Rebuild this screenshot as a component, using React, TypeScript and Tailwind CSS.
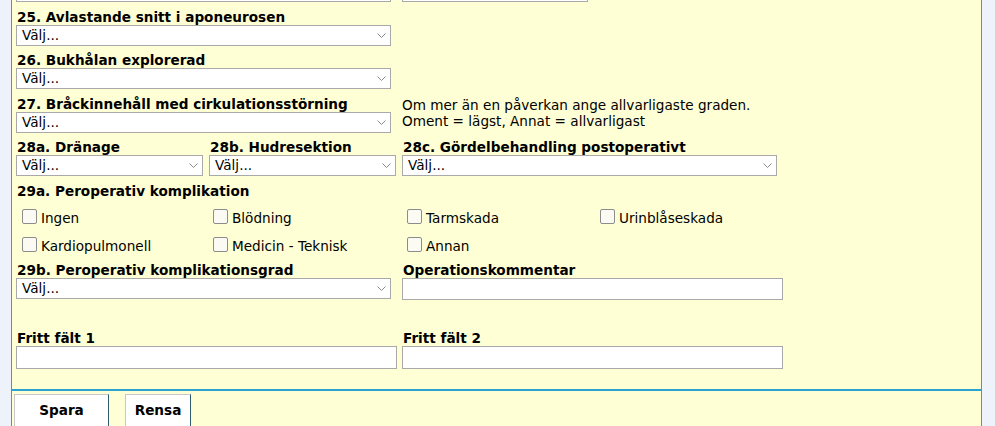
import React from "react";

const FONT = "font-['DejaVu_Sans',Verdana,sans-serif]";

function Chevron() {
  return (
    <svg width="9" height="5" viewBox="0 0 9 5" className="shrink-0">
      <polyline points="0.5,0.5 4.5,4.5 8.5,0.5" fill="none" stroke="#8a8a8a" strokeWidth="1" />
    </svg>
  );
}

function Select({ className = "" }: { className?: string }) {
  return (
    <div
      className={`flex h-[21px] items-center justify-between border border-[#a9a9a9] bg-white pl-[5px] pr-[4px] text-[13.6px] leading-[15px] ${className}`}
    >
      <span>Välj...</span>
      <Chevron />
    </div>
  );
}

function Label({ children }: { children: React.ReactNode }) {
  return <div className="h-[15px] whitespace-nowrap pl-px text-[13.6px] font-bold leading-[15px]">{children}</div>;
}

function TextInput() {
  return <div className="h-[23px] w-[381px] border border-[#a9a9a9] bg-white" />;
}

function Check({ label }: { label: string }) {
  return (
    <label className="flex items-start">
      <span className="h-[15px] w-[15px] shrink-0 rounded-[2px] border border-[#8c8c8c] bg-[#fbfbf3]" />
      <span className="ml-[4px] mt-[2px] whitespace-nowrap text-[13.6px] leading-[15px]">{label}</span>
    </label>
  );
}

export default function App() {
  return (
    <div className={`flex h-[426px] w-full overflow-hidden bg-[#eef2fb] text-black ${FONT}`}>
      <div className="w-[11px] shrink-0" />
      <div className="flex w-[971px] shrink-0 flex-col border-x border-[#3d9cc9] bg-[#ffffd5]">
        <div className="flex flex-col pl-[4px]">
          {/* tail of the previous row's selects */}
          <div className="flex h-[2px] gap-[11px]">
            <div className="w-[375px] border-x border-b border-[#a9a9a9] bg-white" />
            <div className="w-[186px] border-x border-b border-[#a9a9a9] bg-white" />
          </div>

          <div className="mt-[8px]">
            <Label>25. Avlastande snitt i aponeurosen</Label>
            <Select className="w-[375px]" />
          </div>

          <div className="mt-[7px]">
            <Label>26. Bukhålan explorerad</Label>
            <Select className="w-[375px]" />
          </div>

          <div className="mt-[8px] flex">
            <div className="w-[386px] shrink-0">
              <Label>27. Bråckinnehåll med cirkulationsstörning</Label>
              <Select className="w-[375px]" />
            </div>
            <div className="text-[13.6px] leading-[16px]">
              <div>Om mer än en påverkan ange allvarligaste graden.</div>
              <div>Oment = lägst, Annat = allvarligast</div>
            </div>
          </div>

          <div className="mt-[7px] flex">
            <div className="w-[193px] shrink-0">
              <Label>28a. Dränage</Label>
              <Select className="w-[187px]" />
            </div>
            <div className="w-[193px] shrink-0">
              <Label>28b. Hudresektion</Label>
              <Select className="w-[187px]" />
            </div>
            <div>
              <Label>28c. Gördelbehandling postoperativt</Label>
              <Select className="w-[375px]" />
            </div>
          </div>

          <div className="mt-[8px]">
            <Label>29a. Peroperativ komplikation</Label>
          </div>

          <div className="mt-[10px] grid grid-cols-[191px_194px_193px_auto] gap-y-[11px] pl-[6px]">
            <Check label="Ingen" />
            <Check label="Blödning" />
            <Check label="Tarmskada" />
            <Check label="Urinblåseskada" />
            <Check label="Kardiopulmonell" />
            <Check label="Medicin - Teknisk" />
            <Check label="Annan" />
          </div>

          <div className="mt-[9px] flex">
            <div className="w-[386px] shrink-0">
              <Label>29b. Peroperativ komplikationsgrad</Label>
              <Select className="w-[375px]" />
            </div>
            <div>
              <Label>Operationskommentar</Label>
              <div className="h-[22px] w-[381px] border border-[#a9a9a9] bg-white" />
            </div>
          </div>

          <div className="mt-[31px] flex">
            <div className="w-[386px] shrink-0">
              <Label>Fritt fält 1</Label>
              <TextInput />
            </div>
            <div>
              <Label>Fritt fält 2</Label>
              <TextInput />
            </div>
          </div>
        </div>

        <div className="mt-[20px] border-t-2 border-[#2aa3cf]" />

        <div className="flex gap-[16px] pl-[2px] pt-[3px]">
          <button className="flex h-[33px] w-[95px] items-center justify-center border border-[#c8c8c8] border-b-[#2f5f6f] border-r-[#2f5f6f] bg-white text-[13.6px] font-bold leading-[15px]">
            Spara
          </button>
          <button className="flex h-[33px] w-[66px] items-center justify-center border border-[#c8c8c8] border-b-[#2f5f6f] border-r-[#2f5f6f] bg-white text-[13.6px] font-bold leading-[15px]">
            Rensa
          </button>
        </div>
      </div>
    </div>
  );
}
